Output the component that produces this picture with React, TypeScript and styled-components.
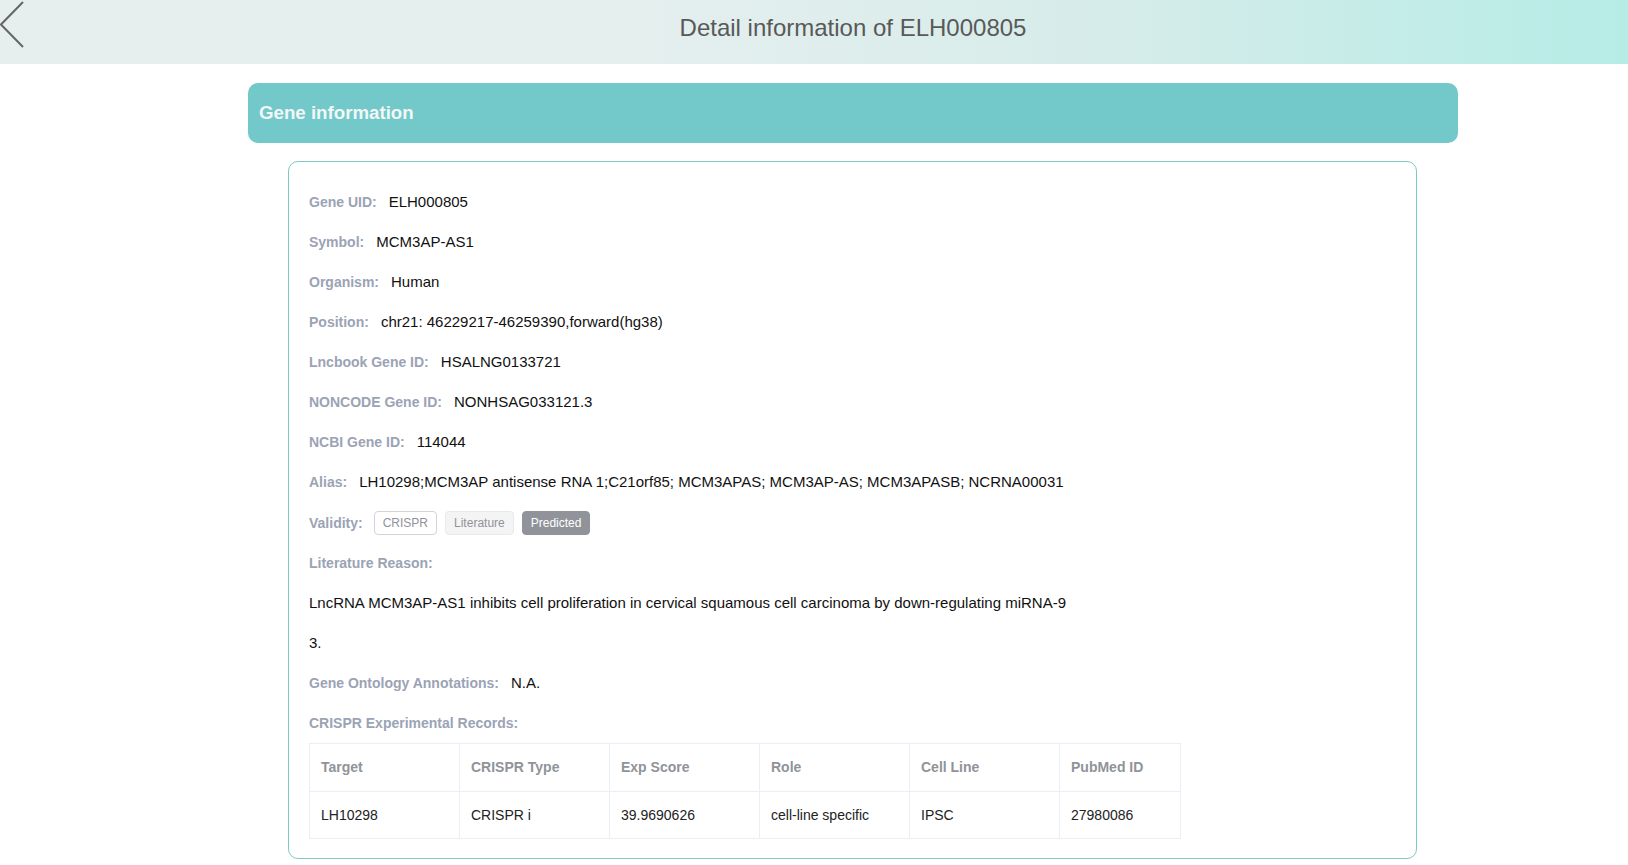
import React from "react";
import styled, { createGlobalStyle } from "styled-components";

const GlobalStyle = createGlobalStyle`
  html, body { margin: 0; padding: 0; background: #ffffff; }
  body { font-family: "Liberation Sans", Arial, sans-serif; }
  * { box-sizing: border-box; }
`;

const Page = styled.div`
  width: 100%;
  min-height: 865px;
  background: #fff;
`;

const Header = styled.header`
  display: flex;
  height: 64px;
  background: linear-gradient(to right, #e6efee 0%, #e4efee 40%, #d6ecea 68%, #b6ece6 100%);
`;

const BackButton = styled.button`
  width: 78px;
  height: 64px;
  padding: 0;
  border: none;
  background: transparent;
  display: flex;
  align-items: flex-start;
  cursor: pointer;
  svg { display: block; }
`;

const Title = styled.h1`
  flex: 1;
  margin: 0;
  text-align: center;
  font-size: 24px;
  font-weight: 400;
  line-height: 55px;
  color: #595959;
`;

const Main = styled.main`
  padding: 0 0 0 78px;
`;

const Banner = styled.div`
  margin: 19px 170px 0;
  height: 60px;
  border-radius: 10px;
  background: #73c8c9;
  display: flex;
  align-items: center;
  padding-left: 11px;
  font-size: 18.7px;
  font-weight: 700;
  color: #f1f7f7;
`;

const Card = styled.section`
  margin: 18px 211px 0 210px;
  border: 1px solid #7ec8c5;
  border-radius: 10px;
  padding: 20px 20px 19px;
`;

const Row = styled.div<{ $h?: number }>`
  display: flex;
  align-items: center;
  height: ${(p) => p.$h ?? 40}px;
  line-height: 40px;
  white-space: nowrap;
`;

const Label = styled.span<{ $gap?: number }>`
  font-size: 14px;
  font-weight: 700;
  color: #9ba3b5;
  margin-right: ${(p) => (p.$gap ?? 12)}px;
`;

const Value = styled.span`
  font-size: 15px;
  color: #111;
`;

const Paragraph = styled.p`
  margin: 0;
  width: 760px;
  font-size: 15px;
  line-height: 40px;
  color: #111;
  word-break: break-all;
`;

const Tags = styled.div`
  display: flex;
  align-items: center;
  gap: 8px;
  padding-top: 1px;
`;

const Tag = styled.span<{ $variant: "plain" | "light" | "dark" }>`
  display: inline-flex;
  align-items: center;
  height: 24px;
  padding: 0 8px;
  border-radius: 4px;
  font-size: 12px;
  line-height: 22px;
  border: 1px solid
    ${(p) => (p.$variant === "plain" ? "#d3d4d6" : p.$variant === "light" ? "#e9e9eb" : "#909399")};
  background: ${(p) => (p.$variant === "plain" ? "#ffffff" : p.$variant === "light" ? "#f4f4f5" : "#909399")};
  color: ${(p) => (p.$variant === "dark" ? "#ffffff" : "#909399")};
`;

const Table = styled.table`
  width: 871px;
  table-layout: fixed;
  border-collapse: collapse;
  font-size: 14px;
`;

const Th = styled.th`
  height: 47.5px;
  padding: 0 11px;
  border: 1px solid #ebeef5;
  text-align: left;
  font-weight: 700;
  color: #909399;
`;

const Td = styled.td`
  height: 47.5px;
  padding: 0 11px;
  border: 1px solid #ebeef5;
  color: #222;
`;

const fields: [string, string][] = [
  ["Gene UID:", "ELH000805"],
  ["Symbol:", "MCM3AP-AS1"],
  ["Organism:", "Human"],
  ["Position:", "chr21: 46229217-46259390,forward(hg38)"],
  ["Lncbook Gene ID:", "HSALNG0133721"],
  ["NONCODE Gene ID:", "NONHSAG033121.3"],
  ["NCBI Gene ID:", "114044"],
  [
    "Alias:",
    "LH10298;MCM3AP antisense RNA 1;C21orf85; MCM3APAS; MCM3AP-AS; MCM3APASB; NCRNA00031",
  ],
];

const columns = ["Target", "CRISPR Type", "Exp Score", "Role", "Cell Line", "PubMed ID"];
const widths = [150, 150, 150, 150, 150, 121];
const records = [["LH10298", "CRISPR i", "39.9690626", "cell-line specific", "IPSC", "27980086"]];

export default function App() {
  return (
    <Page>
      <GlobalStyle />
      <Header>
        <BackButton aria-label="Back">
          <svg width="26" height="50" viewBox="0 0 26 50">
            <polyline points="23,2 1,24.5 23,47" fill="none" stroke="#666" strokeWidth="2" />
          </svg>
        </BackButton>
        <Title>Detail information of ELH000805</Title>
      </Header>
      <Main>
        <Banner>Gene information</Banner>
        <Card>
          {fields.map(([k, v]) => (
            <Row key={k}>
              <Label>{k}</Label>
              <Value>{v}</Value>
            </Row>
          ))}
          <Row $h={41}>
            <Label $gap={11}>Validity:</Label>
            <Tags>
              <Tag $variant="plain">CRISPR</Tag>
              <Tag $variant="light">Literature</Tag>
              <Tag $variant="dark">Predicted</Tag>
            </Tags>
          </Row>
          <Row>
            <Label>Literature Reason:</Label>
          </Row>
          <Paragraph>
            LncRNA MCM3AP-AS1 inhibits cell proliferation in cervical squamous cell carcinoma by
            down-regulating miRNA-93.
          </Paragraph>
          <Row>
            <Label>Gene Ontology Annotations:</Label>
            <Value>N.A.</Value>
          </Row>
          <Row>
            <Label>CRISPR Experimental Records:</Label>
          </Row>
          <Table>
            <colgroup>
              {widths.map((w, i) => (
                <col key={i} style={{ width: w }} />
              ))}
            </colgroup>
            <thead>
              <tr>
                {columns.map((c) => (
                  <Th key={c}>{c}</Th>
                ))}
              </tr>
            </thead>
            <tbody>
              {records.map((r, i) => (
                <tr key={i}>
                  {r.map((c, j) => (
                    <Td key={j}>{c}</Td>
                  ))}
                </tr>
              ))}
            </tbody>
          </Table>
        </Card>
      </Main>
    </Page>
  );
}
